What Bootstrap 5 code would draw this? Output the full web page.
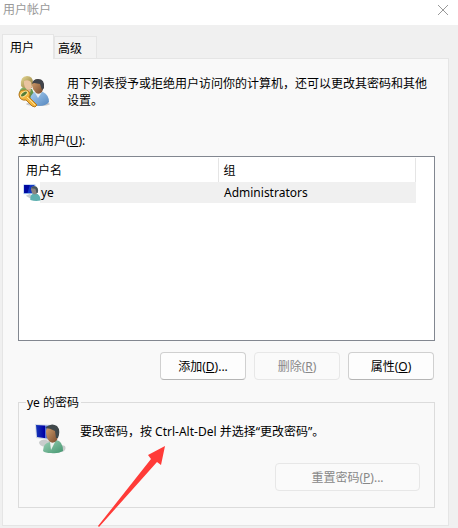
<!DOCTYPE html>
<html lang="zh-CN">
<head>
<meta charset="utf-8">
<meta name="viewport" content="width=device-width, initial-scale=1">
<title>用户帐户</title>
<link href="https://cdn.jsdelivr.net/npm/bootstrap@5.3.0/dist/css/bootstrap.min.css" rel="stylesheet">
<style>
body { font-family: "Noto Sans", "Noto Sans CJK SC", sans-serif; font-size: 12px; line-height: 17px; color: #000; background: #f0f0f0; }
.dialog-title { height: 25px; padding: 0 9px 6px 3px; background: #fff; color: #999; }
.close-btn { --bs-btn-color: #999; line-height: 0; }
.dialog-body { padding: 9px 9px 2px 2px; }
.dialog-tabs { border: 0; height: 25px; }
.dialog-tabs .nav-link { border: 1px solid #e5e5e5; border-radius: 0; color: #000; margin: 0; background: #f3f3f3; height: 23px; padding: 2px 14px 0 3px; position: relative; }
.dialog-tabs .nav-link.active { border-color: #e5e5e5; border-bottom: 0; background: #f9f9f9; color: #000; height: 25px; padding: 1px 19px 0 7px; z-index: 1; }
.dialog-panel { background: #f9f9f9; border: 1px solid #e5e5e5; margin-top: -1px; padding: 16px 13px 17px 15px; }
.intro { gap: 17px; margin-bottom: 23px; }
.user-list { height: 185px; background: #fff; border: 1px solid #828790; padding: 1px 18px 0 4px; margin-top: 7px; }
.user-list table { table-layout: fixed; color: #000; }
.user-list th { font-weight: 400; height: 24px; padding: 0 0 0 5px; border-right: 1px solid #e5e5e5; }
.user-list th:first-child { width: 195px; padding-left: 3px; }
.user-list td { height: 21px; padding: 0 0 0 6px; background: #f0f0f0; }
.user-list td:first-child { padding: 0; background: linear-gradient(90deg, #fff 17px, #f0f0f0 17px); }
.actions { gap: 8px; margin: 11px 1px 0 0; }
.dlg-btn { --bs-btn-font-size: 12px; --bs-btn-line-height: 17px; --bs-btn-padding-x: 0; --bs-btn-padding-y: 0; --bs-btn-border-radius: 4px; --bs-btn-color: #000; --bs-btn-bg: #fdfdfd; --bs-btn-border-color: #d0d0d0; --bs-btn-hover-color: #000; --bs-btn-hover-bg: #f0f6fb; --bs-btn-hover-border-color: #0078d4; --bs-btn-disabled-color: #888; --bs-btn-disabled-bg: #fafafa; --bs-btn-disabled-border-color: #e7e7e7; --bs-btn-disabled-opacity: 1; width: 86px; height: 28px; }
.dlg-btn:enabled { border-bottom-color: #b5b5b5; }
.dlg-wide { width: 145px; }
.password-box { border: 1px solid #dcdcdc; margin-top: 14px; padding: 4px 14px 16px 16px; }
.password-box legend { float: none; width: auto; font-size: 12px; line-height: 17px; margin: 0 0 0 -9px; padding: 0 2px 0 1px; }
.password-note { gap: 13px; height: 48px; }
.arrow-mark { position: absolute; left: 97px; top: 445px; pointer-events: none; z-index: 2; }
</style>
</head>
<body>
<header class="dialog-title d-flex align-items-center justify-content-between">
  <span>用户帐户</span>
  <button type="button" class="close-btn btn p-0 border-0" aria-label="关闭"><svg width="12" height="12" viewBox="0 0 12 12" stroke="currentColor" fill="none"><path d="M1 1 11 11M11 1 1 11"/></svg></button>
</header>
<main class="dialog-body">
  <div class="dialog-tabs nav nav-tabs align-items-end" role="tablist">
    <button type="button" class="nav-link active" id="tab-users" role="tab" aria-selected="true" aria-controls="users">用户</button>
    <button type="button" class="nav-link" role="tab" aria-selected="false">高级</button>
  </div>
  <section class="dialog-panel" id="users" role="tabpanel" aria-labelledby="tab-users">
    <div class="intro d-flex">
      <svg class="flex-shrink-0" width="32" height="33" viewBox="0 0 32 33" aria-hidden="true">
        <defs>
          <linearGradient id="hair" x2="1" y2="1"><stop stop-color="#e9dc98"/><stop offset="1" stop-color="#8a7434"/></linearGradient>
          <linearGradient id="face" x2="1" y2="1"><stop stop-color="#d9a672"/><stop offset="1" stop-color="#74462a"/></linearGradient>
          <linearGradient id="blue" x2="1" y2="1"><stop stop-color="#a9cff0"/><stop offset="1" stop-color="#5486bf"/></linearGradient>
          <linearGradient id="green" x2="1" y2="1"><stop stop-color="#8fbb6d"/><stop offset="1" stop-color="#3f7a36"/></linearGradient>
        </defs>
        <ellipse cx="20" cy="29" rx="12" ry="2" fill="#c8c8c8"/>
        <path d="M1 20Q1 13 6 12L14 14 18 23 5 25Z" fill="url(#green)"/>
        <path d="M3 11Q2 1 9 1Q15 1 15 8L14 13 5 13Z" fill="url(#hair)"/>
        <path d="M6 6Q10 4 13 7L14 12Q12 16 9 15Q6 12 6 9Z" fill="#e9c3a0"/>
        <path d="M7 12Q9 15 13 14L12 18Z" fill="#e0b48c"/>
        <path d="M12 27Q12 19 17 17L25 17Q31 20 31 27Q28 31 21 31Q15 31 12 27Z" fill="url(#blue)"/>
        <path d="M16 16 20 23 24 17Z" fill="#e5edf3"/>
        <path d="M14 10Q15 4 20 4Q26 5 26 12L24 17Q21 20 18 18L15 14Z" fill="url(#face)"/>
        <path d="M14 9Q15 4 20 4Q27 4 26 13L24 15 22 9 16 8Z" fill="#41444a"/>
        <path d="M1 20Q1 15 6 15Q12 15 12 20L11 22 19 30 17 32 14 31 8 25Q2 26 1 20Z" fill="#f3b63f" stroke="#b67920"/>
        <ellipse cx="6" cy="19" rx="4" ry="2" transform="rotate(-38 6 19)" fill="#557d38" stroke="#ffe297"/>
        <path d="M9 22 17 30" stroke="#ffe298"/>
      </svg>
      <p class="m-0">用下列表授予或拒绝用户访问你的计算机，还可以更改其密码和其他设置。</p>
    </div>
    <div id="list-label">本机用户(<u>U</u>):</div>
    <div class="user-list">
      <table class="w-100" aria-labelledby="list-label">
        <thead><tr><th scope="col">用户名</th><th scope="col">组</th></tr></thead>
        <tbody><tr><td><div class="d-flex align-items-center"><svg width="18" height="17" viewBox="0 0 32 32" preserveAspectRatio="none" aria-hidden="true"><path d="M1 1H22V19H1Z" fill="#8fb4e8"/><path d="M2 2H20V17H2Z" fill="#1236c4"/><path d="M2 2H12L8 17H2Z" fill="#0008a0"/><path d="M5 22 12 19 20 25 12 27Z" fill="#c9cfd2"/><path d="M13 30Q12 20 19 18L26 19Q32 23 31 31Q22 33 13 30Z" fill="#5fb0b0"/><path d="M14 10Q14 4 20 4Q27 5 27 13L24 19Q19 21 16 17Z" fill="#8a8580"/><path d="M14 8Q18 2 24 5Q28 9 26 17L24 17 22 9Z" fill="#46565e"/></svg><span>ye</span></div></td><td>Administrators</td></tr></tbody>
      </table>
    </div>
    <div class="actions d-flex justify-content-end">
      <button type="button" class="btn dlg-btn">添加(<u>D</u>)...</button>
      <button type="button" class="btn dlg-btn" disabled>删除(<u>R</u>)</button>
      <button type="button" class="btn dlg-btn">属性(<u>O</u>)</button>
    </div>
    <fieldset class="password-box">
      <legend>ye 的密码</legend>
      <div class="password-note d-flex">
        <svg class="flex-shrink-0 mt-2" width="32" height="32" viewBox="0 0 32 32" aria-hidden="true">
          <defs>
            <linearGradient id="screen" x2="1" y2="0"><stop stop-color="#1737b8"/><stop offset=".5" stop-color="#0000a5"/><stop offset=".55" stop-color="#5a77d6"/><stop offset="1" stop-color="#1831a5"/></linearGradient>
            <linearGradient id="shirt" x2="1" y2="1"><stop stop-color="#9fd2b8"/><stop offset="1" stop-color="#43966f"/></linearGradient>
          </defs>
          <path d="M4 19Q7 15 14 18L30 23Q32 27 27 29L10 24Q4 23 4 19Z" fill="#c9cccc"/>
          <path d="M0 1 20 2 18 18 1 15Z" fill="#d3dce6"/>
          <path d="M1 2 18 3 16 16 2 14Z" fill="url(#screen)"/>
          <path d="M8 28Q8 20 15 19L21 17Q28 18 28 28Q23 31 16 30Q10 30 8 28Z" fill="url(#shirt)"/>
          <path d="M15 19 16 27 20 19Z" fill="#edf2ee"/>
          <path d="M11 8Q12 2 18 2Q24 3 24 10L22 17Q18 22 14 18Q11 15 11 8Z" fill="url(#face)"/>
          <path d="M10 5Q16 -1 22 3Q26 7 23 15L21 15 20 8Q15 5 10 5Z" fill="#40484b"/>
        </svg>
        <p class="m-0 pt-2">要改密码，按 Ctrl-Alt-Del 并选择“更改密码”。</p>
      </div>
      <div class="d-flex justify-content-end"><button type="button" class="btn dlg-btn dlg-wide" disabled>重置密码(<u>P</u>)...</button></div>
    </fieldset>
  </section>
</main>
<svg class="arrow-mark" width="70" height="83" viewBox="0 0 70 83" aria-hidden="true"><path d="M1 81 54 14 51 10 68 1 64 20 60 17 2 82Z" fill="#ff3b38"/></svg>
<script src="https://cdn.jsdelivr.net/npm/bootstrap@5.3.0/dist/js/bootstrap.bundle.min.js"></script>
</body>
</html>
